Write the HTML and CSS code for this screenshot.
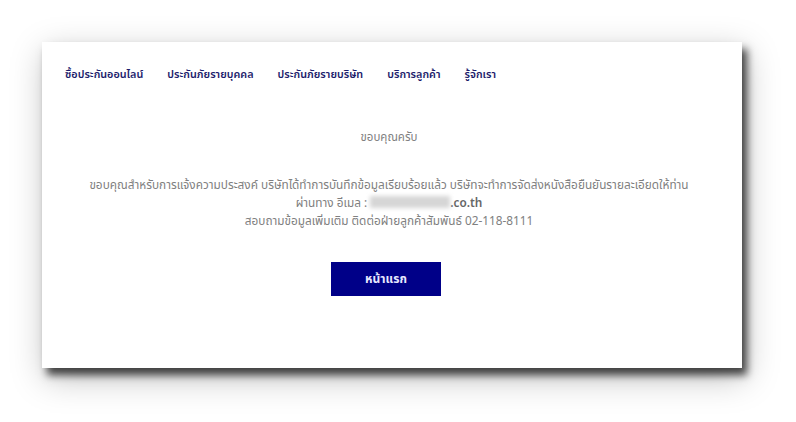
FILE: index.html
```html
<!DOCTYPE html>
<html lang="th">
<head>
    <meta charset="UTF-8">
    <meta name="viewport" content="width=device-width, initial-scale=1.0">
    <title>ขอบคุณครับ</title>
    <link rel="stylesheet" href="styles.css">
</head>
<body>

<div class="card">
    <nav class="menu">
        <a href="#">ซื้อประกันออนไลน์</a>
        <a href="#">ประกันภัยรายบุคคล</a>
        <a href="#">ประกันภัยรายบริษัท</a>
        <a href="#">บริการลูกค้า</a>
        <a href="#">รู้จักเรา</a>
    </nav>

    <div class="thanks">
        <h1>ขอบคุณครับ</h1>
        <p class="message">
            ขอบคุณสำหรับการแจ้งความประสงค์ บริษัทได้ทำการบันทึกข้อมูลเรียบร้อยแล้ว บริษัทจะทำการจัดส่งหนังสือยืนยันรายละเอียดให้ท่าน<br>
            ผ่านทาง อีเมล : <span class="hidden-mail"></span><b>.co.th</b><br>
            สอบถามข้อมูลเพิ่มเติม ติดต่อฝ่ายลูกค้าสัมพันธ์ 02-118-8111
        </p>
        <button class="home-btn">หน้าแรก</button>
    </div>
</div>

</body>
</html>
```

FILE: styles.css
```css
body {
    margin: 0;
    padding: 42px 0 60px 42px;
    background-color: #ffffff;
    font-family: "Noto Sans Thai", "Noto Sans", "DejaVu Sans", sans-serif;
}
.card {
    width: 700px;
    height: 326px;
    box-sizing: border-box;
    background-color: white;
    box-shadow: 5px 7px 8px rgba(0, 0, 0, 0.7), 3px 10px 32px rgba(0, 0, 0, 0.25);
}
.menu {
    display: flex;
    gap: 24px;
    padding: 25px 0 0 23px;
}
.menu a {
    color: #1c1c6b;
    font-size: 10.8px;
    font-weight: 600;
    text-decoration: none;
}
.thanks {
    text-align: center;
    color: #808080;
}
h1 {
    margin: 46px 0 0 -6px;
    font-size: 11.5px;
    font-weight: normal;
}
.message {
    margin: 30px 0 0 -6px;
    font-size: 11.8px;
    line-height: 18px;
}
.hidden-mail {
    display: inline-block;
    width: 80px;
    height: 12px;
    vertical-align: -1px;
    background-color: #d6d6d6;
    filter: blur(2px);
}
.message b {
    color: #666;
    font-weight: 600;
}
.home-btn {
    margin: 32px 12px 0 0;
    width: 110px;
    height: 34px;
    border: none;
    background-color: #000088;
    color: #e8e8ff;
    font-family: inherit;
    font-size: 12px;
    font-weight: bold;
}
```
